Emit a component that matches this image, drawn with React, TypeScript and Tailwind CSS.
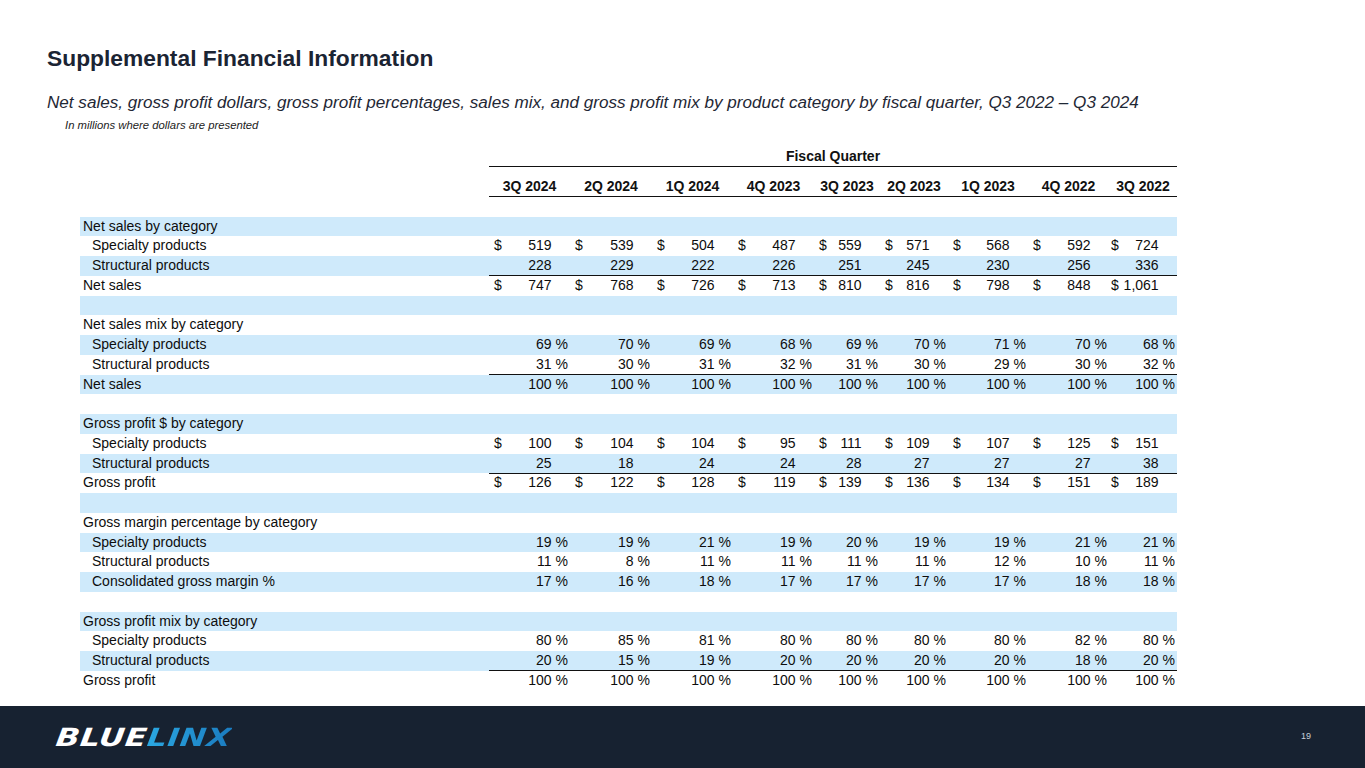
import React from "react";

type Row = {
  label: string;
  kind: "section" | "item" | "total" | "blank";
  values?: string[];
  dollar?: boolean;
  pct?: boolean;
  underline?: boolean;
};

const quarters = ["3Q 2024", "2Q 2024", "1Q 2024", "4Q 2023", "3Q 2023", "2Q 2023", "1Q 2023", "4Q 2022", "3Q 2022"];

const rows: Row[] = [
  { label: "Net sales by category", kind: "section" },
  { label: "Specialty products", kind: "item", dollar: true, values: ["519", "539", "504", "487", "559", "571", "568", "592", "724"] },
  { label: "Structural products", kind: "item", underline: true, values: ["228", "229", "222", "226", "251", "245", "230", "256", "336"] },
  { label: "Net sales", kind: "total", dollar: true, values: ["747", "768", "726", "713", "810", "816", "798", "848", "1,061"] },
  { label: "", kind: "blank" },
  { label: "Net sales mix by category", kind: "section" },
  { label: "Specialty products", kind: "item", pct: true, values: ["69", "70", "69", "68", "69", "70", "71", "70", "68"] },
  { label: "Structural products", kind: "item", pct: true, underline: true, values: ["31", "30", "31", "32", "31", "30", "29", "30", "32"] },
  { label: "Net sales", kind: "total", pct: true, values: ["100", "100", "100", "100", "100", "100", "100", "100", "100"] },
  { label: "", kind: "blank" },
  { label: "Gross profit $ by category", kind: "section" },
  { label: "Specialty products", kind: "item", dollar: true, values: ["100", "104", "104", "95", "111", "109", "107", "125", "151"] },
  { label: "Structural products", kind: "item", underline: true, values: ["25", "18", "24", "24", "28", "27", "27", "27", "38"] },
  { label: "Gross profit", kind: "total", dollar: true, values: ["126", "122", "128", "119", "139", "136", "134", "151", "189"] },
  { label: "", kind: "blank" },
  { label: "Gross margin percentage by category", kind: "section" },
  { label: "Specialty products", kind: "item", pct: true, values: ["19", "19", "21", "19", "20", "19", "19", "21", "21"] },
  { label: "Structural products", kind: "item", pct: true, values: ["11", "8", "11", "11", "11", "11", "12", "10", "11"] },
  { label: "Consolidated gross margin %", kind: "item", pct: true, values: ["17", "16", "18", "17", "17", "17", "17", "18", "18"] },
  { label: "", kind: "blank" },
  { label: "Gross profit mix by category", kind: "section" },
  { label: "Specialty products", kind: "item", pct: true, values: ["80", "85", "81", "80", "80", "80", "80", "82", "80"] },
  { label: "Structural products", kind: "item", pct: true, underline: true, values: ["20", "15", "19", "20", "20", "20", "20", "18", "20"] },
  { label: "Gross profit", kind: "total", pct: true, values: ["100", "100", "100", "100", "100", "100", "100", "100", "100"] },
];

const gridCols = "grid grid-cols-[409px_81px_82px_81px_81px_66px_68px_80px_81px_68px]";

function DataRow({ row, band }: { row: Row; band: boolean }) {
  return (
    <div className={`${gridCols} h-[19.75px] text-[14px] leading-[19px] text-[#0d0d0d] ${band ? "bg-[#cfeafb]" : "bg-white"}`}>
      <div className={row.kind === "item" ? "pl-[12px]" : "pl-[3px]"}>{row.label}</div>
      {quarters.map((q, i) => (
        <div
          key={q}
          className={`flex justify-between pr-[2px] ${i === 8 ? "pl-[2px]" : "pl-[5px]"} ${row.underline ? "border-b border-[#111]" : ""}`}
        >
          <span>{row.dollar ? "$" : ""}</span>
          {row.values && (
            <span>
              {row.values[i]}
              <span className={row.pct ? "" : "invisible"}>{"\u00a0%"}</span>
            </span>
          )}
        </div>
      ))}
    </div>
  );
}

export default function App() {
  return (
    <div className="w-[1365px] h-[768px] flex flex-col bg-white font-['Liberation_Sans',Arial,sans-serif] overflow-hidden">
      <main className="flex-1 pt-[47px]">
        <h1 className="pl-[47px] text-[22.8px] leading-[23px] font-bold text-[#1b2433]">Supplemental Financial Information</h1>
        <p className="pl-[47px] mt-[24px] text-[17.1px] leading-[17px] italic text-[#1f2835]">
          Net sales, gross profit dollars, gross profit percentages, sales mix, and gross profit mix by product category by fiscal quarter, Q3 2022 – Q3 2024
        </p>
        <p className="pl-[65px] mt-[8px] text-[11.3px] leading-[12px] italic text-[#222]">In millions where dollars are presented</p>

        {/* Table */}
        <div className="ml-[80px] mt-[16px] w-[1097px]">
          <div className={`${gridCols} h-[20px] text-[14px] leading-[19px] font-bold text-[#111]`}>
            <div />
            <div className="col-span-9 text-center border-b border-[#111]">Fiscal Quarter</div>
          </div>
          <div className={`${gridCols} mt-[10px] h-[20px] text-[14px] leading-[19px] font-bold text-[#111]`}>
            <div />
            {quarters.map((q) => (
              <div key={q} className="text-center border-b border-[#111]">{q}</div>
            ))}
          </div>
          <div className="h-[19.5px]" />
          {rows.map((r, i) => (
            <DataRow key={i} row={r} band={i % 2 === 0} />
          ))}
        </div>
      </main>

      <footer className="h-[62px] bg-[#172231] flex items-center justify-between pl-[56px] pr-[54px]">
        <div className="inline-block origin-left scale-x-[1.25] text-[25px] leading-none font-bold italic tracking-[0.5px] font-['DejaVu_Sans',sans-serif] -skew-x-6">
          <span className="text-white">BLUE</span>
          <span className="bg-gradient-to-r from-[#2ba8e2] to-[#1b7cc0] bg-clip-text text-transparent">LINX</span>
        </div>
        <span className="text-[9px] text-[#c8d0da]">19</span>
      </footer>
    </div>
  );
}
